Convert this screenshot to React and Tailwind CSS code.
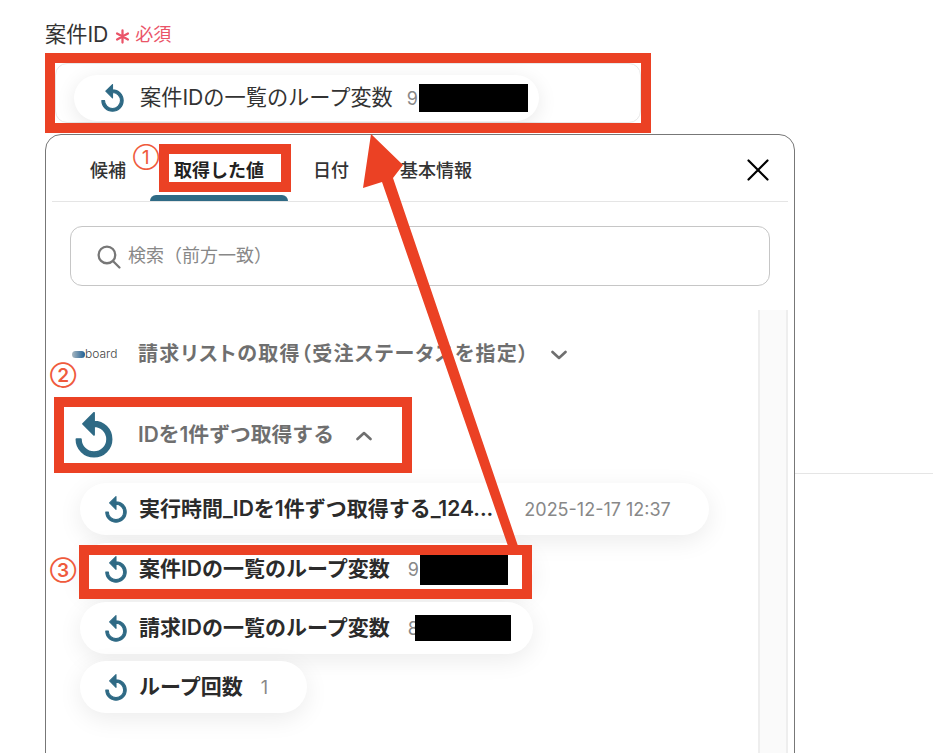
import React from "react";

const Replay = ({ className }) => (
  <svg viewBox="3.4 0.6 17.2 21" className={className} fill="#2f6a85" stroke="#2f6a85" strokeWidth="0.85" strokeLinejoin="round">
    <path d="M12 5V1L7 6l5 5V7c3.31 0 6 2.69 6 6s-2.69 6-6 6-6-2.69-6-6H4c0 4.42 3.58 8 8 8s8-3.58 8-8-3.58-8-8-8z" />
  </svg>
);

const Chevron = ({ up }) => (
  <svg viewBox="0 0 16 10" className="w-[16px] h-[10px]" fill="none" stroke="#6f6f6f" strokeWidth="2.6" strokeLinecap="round" strokeLinejoin="round">
    <polyline points={up ? "1.5,8 8,2 14.5,8" : "1.5,2 8,8 14.5,2"} />
  </svg>
);

const Pill = ({ children, className }) => (
  <div className={"flex items-center h-[52px] rounded-full bg-white pl-[25px] shadow-[0_6px_24px_rgba(0,0,0,0.08)] " + className}>
    <Replay className="w-[22px] h-[27px] mr-[12px] shrink-0" />
    {children}
  </div>
);

export default function App() {
  return (
    <div className="relative flex w-[933px] h-[753px] overflow-hidden bg-white text-[#333] font-['Inter','Noto_Sans_CJK_JP',sans-serif]">
      <div className="w-[750px] ml-[45px] shrink-0">
        <div className="flex items-center h-[33px] text-[21.2px] leading-none mt-[20px] pb-[3px]">
          <span>案件ID</span>
          <svg viewBox="0 0 16 16" className="ml-[7px] mt-[3px] w-[15px] h-[15px]" fill="none" stroke="#ea5468" strokeWidth="2.4" strokeLinecap="round">
            <path d="M8 1.5v13M2.2 4.8l11.6 6.4M13.8 4.8 2.2 11.2" />
          </svg>
          <span className="ml-[5px] text-[18px] text-[#ea5468]">必須</span>
        </div>

        <div className="w-[606px] h-[81px] px-[10px] pt-[10px]">
          <div className="h-[60px] border border-[#e8e8e8] rounded-[12px] pl-[18px] pt-[11px]">
            <div className="flex items-center w-[465px] h-[46px] rounded-full bg-white pl-[27px] shadow-[0_4px_20px_rgba(0,0,0,0.09)]">
              <Replay className="w-[23px] h-[28px] mr-[16px] shrink-0" />
              <span className="text-[21.2px]">案件IDの一覧のループ変数</span>
              <span className="ml-[14px] text-[18px] text-[#888]">9</span>
              <span className="w-[109px] h-[28px] bg-black ml-[1px]" />
            </div>
          </div>
        </div>

        <div className="w-[750px] h-[640px] border border-[#777] rounded-t-[16px] bg-white">
          <div className="flex items-center h-[67px] mx-[6px] border-b border-[#e5e5e5] text-[18px] pl-[14px]">
            <div className="px-[24px] h-full flex items-center pt-[5px] font-medium">候補</div>
            <div className="relative px-[24px] h-full flex items-center pt-[5px] font-semibold text-[#222]">
              取得した値
              <div className="absolute left-0 right-0 bottom-0 h-[6px] bg-[#2f6a85] rounded-t-[6px]" />
            </div>
            <div className="pl-[25px] pr-[27px] h-full flex items-center pt-[5px] font-medium">日付</div>
            <div className="px-[24px] h-full flex items-center pt-[5px] font-medium">基本情報</div>
            <svg viewBox="0 0 22 22" className="ml-auto mr-[19px] mt-[3px] w-[22px] h-[22px]" fill="none" stroke="#000" strokeWidth="2.2" strokeLinecap="round">
              <path d="M1.5 1.5 20.5 20.5M20.5 1.5 1.5 20.5" />
            </svg>
          </div>

          <div className="flex items-center w-[700px] h-[60px] mt-[24px] ml-[24px] border border-[#c6c6c6] rounded-[12px] pl-[25px]">
            <svg viewBox="0 0 24 24" className="w-[25px] h-[25px]" fill="none" stroke="#777" strokeWidth="2.2" strokeLinecap="round">
              <circle cx="10.5" cy="10.5" r="8" />
              <path d="m16.5 16.5 6 6" />
            </svg>
            <span className="ml-[7px] text-[18px] leading-[28px] text-[#888]">検索（前方一致）</span>
          </div>

          <div className="flex h-[500px] mt-[24px] mr-[6px]">
            <div className="flex-1 min-w-0">
              <div className="flex items-center h-[48px] mt-[20px] pl-[26px]">
                <div className="flex items-center w-[66px]">
                  <span className="w-[13px] h-[7px] rounded-full bg-[linear-gradient(90deg,#a9b7c0,#1f6095)] blur-[0.5px]" />
                  <span className="text-[12px] font-light leading-none text-[#444]">board</span>
                </div>
                <span className="text-[20px] font-semibold text-[#6f6f6f] [font-feature-settings:'palt'] tracking-[1.3px]">請求リストの取得（受注ステータスを指定）</span>
                <span className="ml-[22px] mt-[2px]"><Chevron /></span>
              </div>

              <div className="flex items-center h-[48px] mt-[33px] pl-[29px]">
                <Replay className="w-[38px] h-[46px] mr-[25px]" />
                <span className="text-[20.8px] font-semibold text-[#6f6f6f]">IDを1件ずつ取得する</span>
                <span className="ml-[22px] mt-[2px]"><Chevron up /></span>
              </div>

              <div className="flex flex-col items-start gap-[7px] mt-[24px] pl-[34px] text-[21px] font-semibold text-[#2b2b2b]">
                <Pill className="w-[629px] mb-[1px]">
                  <span>実行時間_IDを1件ずつ取得する_124...</span>
                  <span className="ml-[31px] text-[18px] font-normal text-[#888]">2025-12-17 12:37</span>
                </Pill>
                <Pill className="w-[453px]">
                  <span>案件IDの一覧のループ変数</span>
                  <span className="ml-[18px] text-[18px] font-normal text-[#888]">9</span>
                  <span className="w-[88px] h-[32px] bg-black ml-[1px] mt-[-1px]" />
                </Pill>
                <Pill className="w-[453px]">
                  <span>請求IDの一覧のループ変数</span>
                  <span className="ml-[18px] text-[18px] font-normal text-[#888]">8</span>
                  <span className="w-[96px] h-[26px] bg-black ml-[-4px]" />
                </Pill>
                <Pill className="w-[227px]">
                  <span>ループ回数</span>
                  <span className="ml-[18px] text-[18px] font-normal text-[#888]">1</span>
                </Pill>
              </div>
            </div>
            <div className="w-[30px] h-full bg-[#fafafa] border-x-2 border-[#eeeeee]" />
          </div>
        </div>
      </div>

      <div className="flex-1 h-px mt-[473px] bg-[#e5e5e5]" />

      <div className="absolute left-[45px] top-[53px] w-[606px] h-[80px] border-[10px] border-[#eb4124]" />
      <div className="absolute left-[159px] top-[144px] w-[132px] h-[48px] border-[10px] border-[#eb4124]" />
      <div className="absolute left-[54px] top-[397px] w-[358px] h-[76px] border-[10px] border-[#eb4124]" />
      <div className="absolute left-[79px] top-[545px] w-[453px] h-[54px] border-[10px] border-[#eb4124]" />

      <span className="absolute left-[133px] top-[146px] text-[19px] leading-[24px] text-[#ef5a3c]">①</span>
      <span className="absolute left-[50px] top-[364px] text-[19px] leading-[24px] font-semibold text-[#ef5a3c]">②</span>
      <span className="absolute left-[50px] top-[559px] text-[19px] leading-[24px] font-semibold text-[#ef5a3c]">③</span>

      <svg viewBox="0 0 933 753" className="absolute left-0 top-0 w-[933px] h-[753px] pointer-events-none">
        <polygon fill="#eb4124" points="371,134 403,165 393,178 518,546 508,546 382,182 363,188" />
      </svg>
    </div>
  );
}
